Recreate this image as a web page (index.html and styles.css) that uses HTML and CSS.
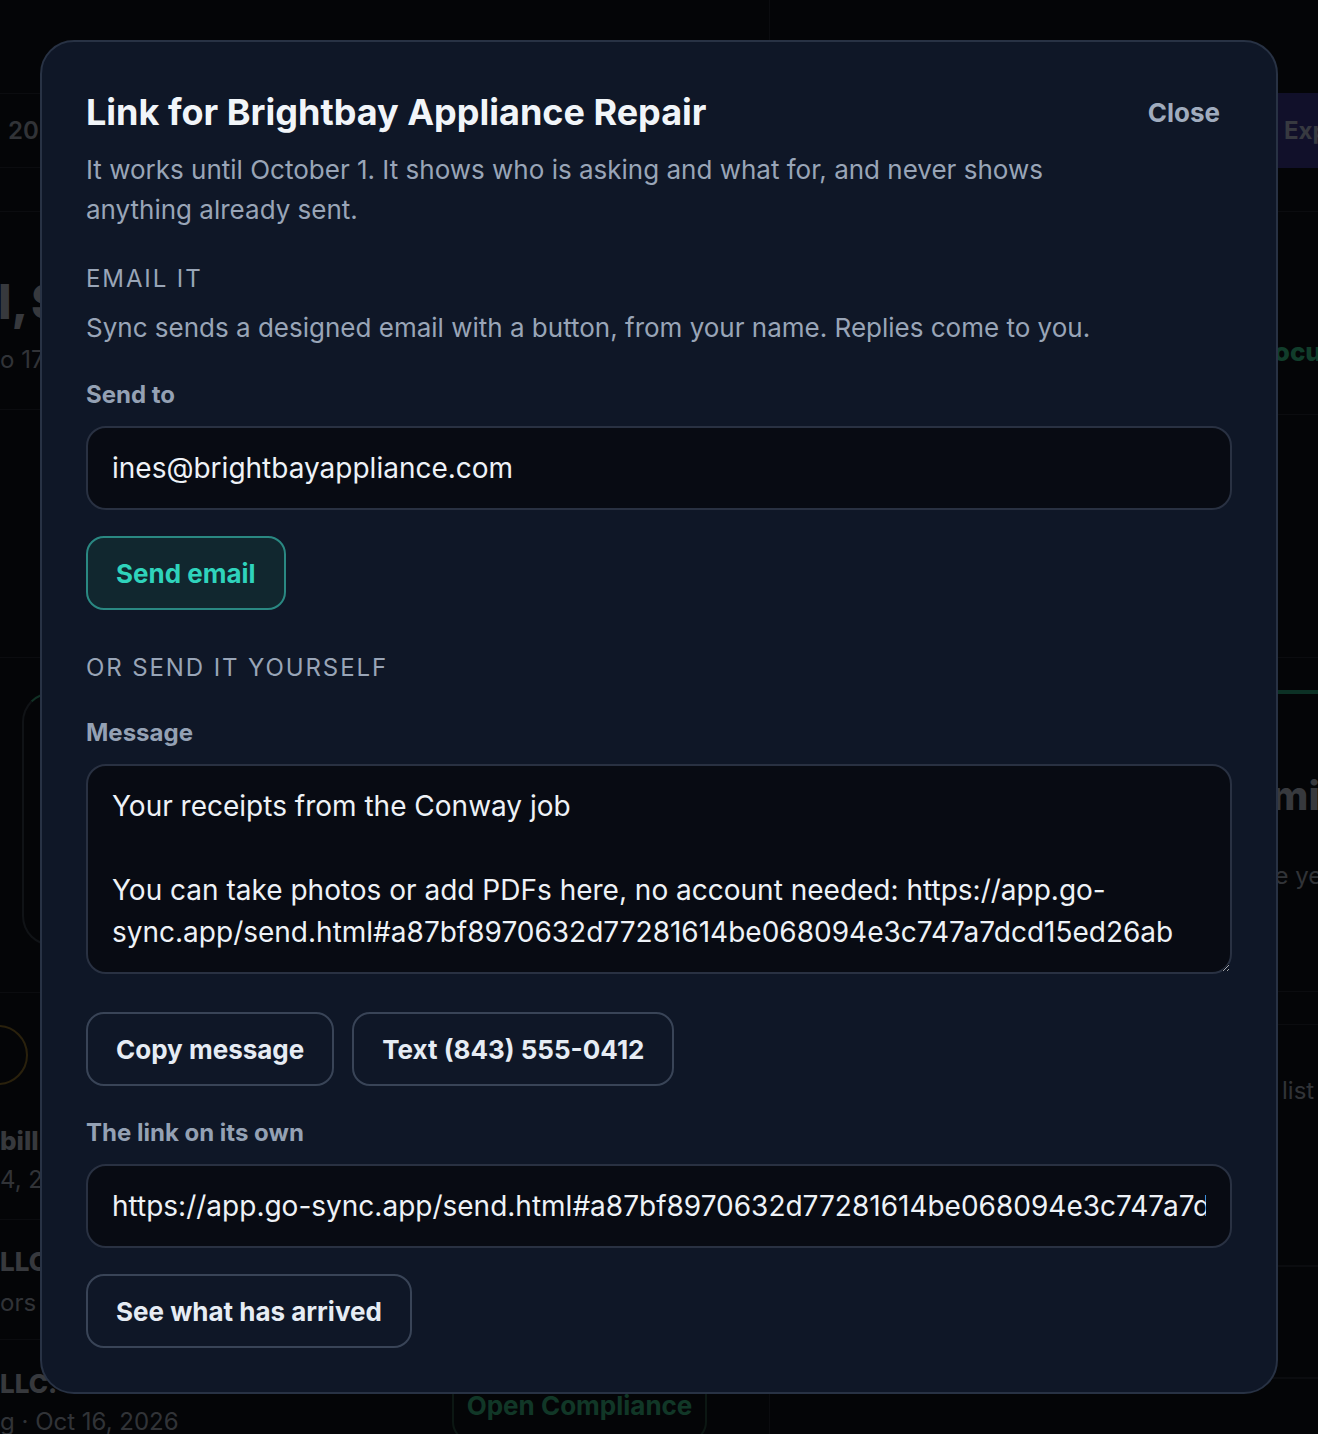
FILE: index.html
```html
<!DOCTYPE html>
<html lang="en">
<head>
<meta charset="utf-8">
<title>Link for Brightbay Appliance Repair</title>
<link rel="stylesheet" href="styles.css">
</head>
<body>
<div class="page">
  <div class="bg-left">
    <div class="bg-row bg-bar"><span class="bg-muted">2026 · Quarterly</span></div>
    <div class="bg-row bg-gap"></div>
    <div class="bg-row bg-stat">
      <div class="bg-big">l, $4,210.00</div>
      <div class="bg-muted">o 17 receipts waiting</div>
    </div>
    <div class="bg-row bg-empty"></div>
    <div class="bg-row bg-cards">
      <div class="bg-card"></div>
    </div>
    <div class="bg-row bg-person">
      <div class="bg-avatar"></div>
      <div class="bg-name">bill</div>
      <div class="bg-muted bg-sub">4, 2026</div>
    </div>
    <div class="bg-row bg-llc">
      <div class="bg-name">LLC</div>
      <div class="bg-muted">ors</div>
    </div>
    <div class="bg-row bg-last">
      <div class="bg-lasttext">
        <div class="bg-name">LLC.</div>
        <div class="bg-muted">g · Oct 16, 2026</div>
      </div>
      <div class="bg-btn">Open Compliance</div>
    </div>
  </div>
  <div class="bg-right">
    <div class="bg-rrow bg-rbar"><span class="bg-export">Export</span></div>
    <div class="bg-rrow bg-rgap"></div>
    <div class="bg-rrow bg-rdocs"><span class="bg-green">Documents</span></div>
    <div class="bg-rrow bg-rempty"></div>
    <div class="bg-rrow bg-rcard">
      <div class="bg-rcardtitle">Submit</div>
      <div class="bg-muted">for the year</div>
    </div>
    <div class="bg-rrow bg-rthin"></div>
    <div class="bg-rrow bg-rlist"><span class="bg-muted">list</span></div>
    <div class="bg-rbox"></div>
  </div>
</div>

<div class="overlay">
  <div class="modal" role="dialog" aria-labelledby="modal-title">
    <div class="modal-head">
      <h1 id="modal-title" class="modal-title">Link for Brightbay Appliance Repair</h1>
      <button class="close-btn" type="button">Close</button>
    </div>
    <p class="modal-desc">It works until October 1. It shows who is asking and what for, and never shows anything already sent.</p>

    <div class="section-title section-email">EMAIL IT</div>
    <p class="section-desc">Sync sends a designed email with a button, from your name. Replies come to you.</p>

    <label class="field-label label-send" for="send-to">Send to</label>
    <input id="send-to" class="field" type="text" value="ines@brightbayappliance.com">
    <div class="row row-send">
      <button class="btn btn-primary" type="button">Send email</button>
    </div>

    <div class="section-title section-yourself">OR SEND IT YOURSELF</div>

    <label class="field-label label-message" for="message">Message</label>
    <textarea id="message" class="field field-area">Your receipts from the Conway job

You can take photos or add PDFs here, no account needed: https://app.go-sync.app/send.html#a87bf8970632d77281614be068094e3c747a7dcd15ed26ab</textarea>
    <div class="row row-actions">
      <button class="btn" type="button">Copy message</button>
      <button class="btn" type="button">Text (843) 555-0412</button>
    </div>

    <label class="field-label label-link" for="link">The link on its own</label>
    <input id="link" class="field" type="text" value="https://app.go-sync.app/send.html#a87bf8970632d77281614be068094e3c747a7dcd15ed26ab" readonly>
    <div class="row row-arrived">
      <button class="btn" type="button">See what has arrived</button>
    </div>
  </div>
</div>
</body>
</html>
```

FILE: styles.css
```css
html, body {
  margin: 0;
  padding: 0;
}

body {
  background: #0b0d12;
  font-family: Inter, "Noto Sans", "Liberation Sans", sans-serif;
  color: #e5e7eb;
  overflow: hidden;
}

/* ---------- background page (dimmed) ---------- */
.page {
  height: 1434px;
  overflow: hidden;
  display: grid;
  grid-template-columns: 770px 1fr;
}

.bg-left {
  border-right: 1px solid #1c2027;
  padding-top: 93px;
  display: flex;
  flex-direction: column;
  overflow: hidden;
}

.bg-row {
  flex-shrink: 0;
  border-bottom: 1px solid #1c2027;
  box-sizing: border-box;
  white-space: nowrap;
}

.bg-bar {
  border-top: 1px solid #1c2027;
  height: 75px;
  display: flex;
  align-items: center;
  padding-left: 8px;
  font-size: 24px;
  font-weight: 600;
}

.bg-gap { height: 44px; }

.bg-stat {
  height: 198px;
  padding-top: 62px;
  display: flex;
  flex-direction: column;
  gap: 14px;
}

.bg-big {
  font-size: 48px;
  font-weight: 800;
  color: #8a9099;
  line-height: 56px;
  margin-left: -2px;
  word-spacing: -6px;
}

.bg-muted {
  color: #7a808a;
  font-size: 24px;
  line-height: 32px;
}

.bg-empty { height: 248px; }

.bg-cards {
  height: 335px;
  padding: 34px 0 0 22px;
}

.bg-card {
  width: 300px;
  height: 250px;
  border: 2px solid #2a3038;
  border-top-color: #2b7a5c;
  border-radius: 30px;
}

.bg-person {
  height: 227px;
  padding-top: 32px;
  display: flex;
  flex-direction: column;
}

.bg-avatar {
  width: 56px;
  height: 56px;
  border-radius: 50%;
  border: 2px solid #6a5420;
  margin-left: -32px;
  margin-bottom: 38px;
}

.bg-sub { margin-top: 5px; }

.bg-name {
  font-size: 26px;
  font-weight: 800;
  color: #8a9099;
  line-height: 36px;
}

.bg-llc {
  height: 120px;
  padding-top: 24px;
  display: flex;
  flex-direction: column;
  gap: 7px;
}

.bg-last {
  border-bottom: none;
  display: flex;
  justify-content: space-between;
  align-items: flex-start;
  padding-top: 26px;
  padding-right: 62px;
}

.bg-lasttext {
  display: flex;
  flex-direction: column;
  gap: 4px;
}

.bg-btn {
  margin-top: 4px;
  padding: 18px 0;
  border: 2px solid #1f3a30;
  border-radius: 20px;
  color: #2c8a63;
  font-size: 26px;
  font-weight: 700;
  width: 255px;
  height: 72px;
  box-sizing: border-box;
  text-align: center;
}

.bg-right {
  padding-top: 93px;
  display: flex;
  flex-direction: column;
  overflow: hidden;
}

.bg-rrow {
  flex-shrink: 0;
  box-sizing: border-box;
  white-space: nowrap;
  border-bottom: 1px solid #1c2027;
}

.bg-rbar {
  height: 75px;
  border-bottom: none;
  padding-left: 506px;
}

.bg-export {
  display: flex;
  align-items: center;
  height: 75px;
  padding: 0 20px 0 8px;
  background: #2c2a6a;
  color: #8a8fa0;
  font-size: 24px;
  font-weight: 700;
}

.bg-rgap { height: 44px; }

.bg-rdocs {
  height: 203px;
  padding-top: 124px;
  padding-left: 485px;
}

.bg-green {
  color: #2c9a6c;
  font-size: 26px;
  font-weight: 800;
}

.bg-rempty { height: 243px; }

.bg-rcard {
  height: 302px;
  border-top: 4px solid #1f7a5c;
  margin-top: 32px;
  padding-top: 80px;
  padding-left: 424px;
  display: flex;
  flex-direction: column;
  gap: 42px;
}

.bg-rcard .bg-muted { padding-left: 20px; }

.bg-rcardtitle {
  font-size: 40px;
  font-weight: 800;
  color: #8a9099;
  line-height: 44px;
}

.bg-rthin { height: 33px; }

.bg-rlist {
  height: 240px;
  padding-top: 50px;
  border-bottom: none;
  padding-left: 512px;
}

.bg-rbox {
  flex-shrink: 0;
  height: 110px;
  border: 2px solid #1c2027;
  border-radius: 28px;
  margin-right: -40px;
}

/* ---------- overlay + modal ---------- */
.overlay {
  position: fixed;
  inset: 0;
  background: rgba(0, 0, 0, 0.6);
  padding: 40px;
}

.modal {
  background: #0f1727;
  border: 2px solid #283244;
  border-radius: 34px;
  padding: 48px 44px 44px;
  box-sizing: border-box;
  display: flex;
  flex-direction: column;
  align-items: flex-start;
}

.modal-head {
  align-self: stretch;
  display: flex;
  justify-content: space-between;
  align-items: center;
}

.modal-title {
  margin: 0;
  font-size: 36px;
  line-height: 44px;
  font-weight: 700;
  color: #f1f5f9;
}

.close-btn {
  background: transparent;
  border: none;
  font-family: inherit;
  font-size: 26px;
  font-weight: 700;
  color: #a0acbe;
  padding: 6px 12px;
  cursor: pointer;
}

.modal-desc {
  margin: 16px 0 0;
  max-width: 1000px;
  font-size: 26px;
  line-height: 40px;
  color: #99a5b7;
}

.section-title {
  font-size: 24px;
  line-height: 32px;
  letter-spacing: 1.9px;
  color: #99a5b7;
  font-weight: 400;
}

.section-email { margin-top: 33px; }

.section-desc {
  margin: 13px 0 0;
  font-size: 26px;
  line-height: 40px;
  color: #99a5b7;
}

.section-yourself { margin-top: 42px; }

.field-label {
  display: block;
  font-size: 24px;
  line-height: 30px;
  font-weight: 700;
  color: #94a1b4;
}

.label-send { margin-top: 32px; }
.label-message { margin-top: 34px; }
.label-link { margin-top: 32px; }

.field {
  align-self: stretch;
  margin-top: 16px;
  height: 84px;
  box-sizing: border-box;
  background: #080b13;
  border: 2px solid #293142;
  border-radius: 20px;
  padding: 0 24px;
  font-family: inherit;
  font-size: 28px;
  color: #eef2f7;
  outline: none;
}

.field-area {
  height: 210px;
  padding: 19px 24px;
  line-height: 42px;
  resize: vertical;
  overflow: hidden;
  display: block;
}

.row {
  display: flex;
  gap: 18px;
}

.row-send { margin-top: 26px; }
.row-actions { margin-top: 38px; }
.row-arrived { margin-top: 26px; }

.btn {
  height: 74px;
  box-sizing: border-box;
  padding: 0 28px;
  border: 2px solid #394457;
  border-radius: 18px;
  background: transparent;
  font-family: inherit;
  font-size: 26px;
  font-weight: 700;
  color: #e6ecf4;
  cursor: pointer;
}

.btn-primary {
  background: #11272f;
  border-color: #2a8882;
  color: #2fd3bc;
}
```
